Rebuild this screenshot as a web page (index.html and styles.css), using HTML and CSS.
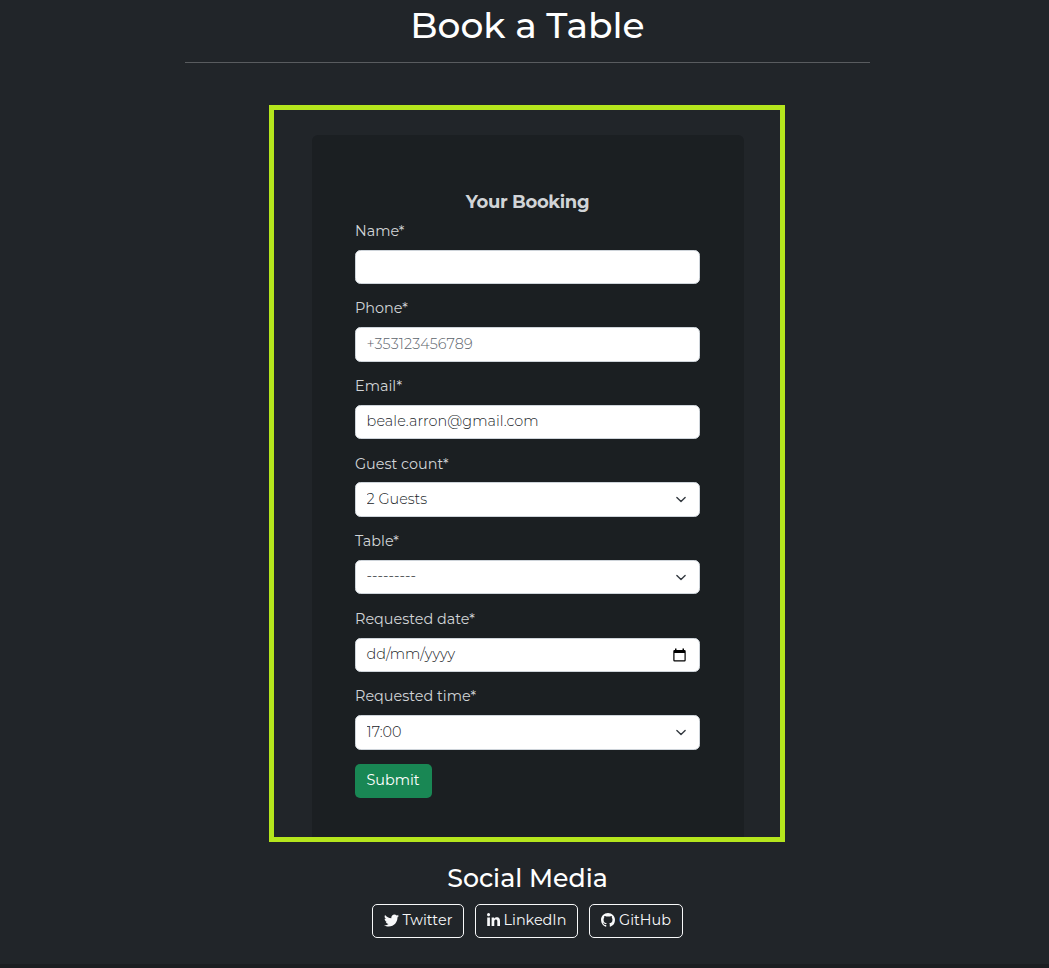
FILE: index.html
```html
<!DOCTYPE html>
<html lang="en">
<head>
<meta charset="utf-8">
<title>Book a Table</title>
<link rel="stylesheet" href="styles.css">
</head>
<body>
<main class="page">
  <h1 class="title">Book a Table</h1>
  <hr class="rule">
  <section class="frame">
    <form class="card">
      <h2 class="card-title">Your Booking</h2>
      <div class="group"><label class="label" for="name">Name*</label><input class="field" id="name" type="text"></div>
      <div class="group"><label class="label" for="phone">Phone*</label><input class="field phone" id="phone" type="tel" placeholder="+353123456789"></div>
      <div class="group"><label class="label" for="email">Email*</label><input class="field email" id="email" type="email" value="beale.arron@gmail.com"></div>
      <div class="group"><label class="label" for="guests">Guest count*</label><select class="field select" id="guests"><option>2 Guests</option></select></div>
      <div class="group"><label class="label" for="table">Table*</label><select class="field select" id="table"><option>---------</option></select></div>
      <div class="group date-group"><label class="label" for="date">Requested date*</label>
        <div class="field date" id="date"><span>dd/mm/yyyy</span>
          <svg class="calendar" width="13" height="14" viewBox="0 0 13 14"><path fill="#000" fill-rule="evenodd" d="M2 .5h1.500V2h6V.5H11V2h.5A1.200 1.200 0 0 1 12.700 3.200V12.300A1.200 1.200 0 0 1 11.500 13.500H1.500A1.200 1.200 0 0 1 .3 12.300V3.200A1.200 1.200 0 0 1 1.500 2H2zM1.500 5v7.300h10V5z"/></svg>
        </div>
      </div>
      <div class="group time-group"><label class="label" for="time">Requested time*</label><select class="field select time" id="time"><option>17:00</option></select></div>
      <button class="submit" type="button">Submit</button>
    </form>
  </section>
</main>
<footer class="footer">
  <h2 class="social-title">Social Media</h2>
  <nav class="links">
    <a class="link twitter"><svg width="15" height="15" viewBox="0 0 512 512"><path fill="currentColor" d="M459.370 151.716c.325 4.548.325 9.097.325 13.645 0 138.720-105.583 298.558-298.558 298.558-59.452 0-114.680-17.219-161.137-47.106 8.447.974 16.568 1.299 25.340 1.299 49.055 0 94.213-16.568 130.274-44.832-46.132-.975-84.792-31.188-98.112-72.772 6.498.974 12.995 1.624 19.818 1.624 9.421 0 18.843-1.300 27.614-3.573-48.081-9.747-84.143-51.980-84.143-102.985v-1.299c13.969 7.797 30.214 12.670 47.431 13.319-28.264-18.843-46.781-51.005-46.781-87.391 0-19.492 5.197-37.360 14.294-52.954 51.655 63.675 129.300 105.258 216.365 109.807-1.624-7.797-2.599-15.918-2.599-24.040 0-57.828 46.782-104.934 104.934-104.934 30.213 0 57.502 12.670 76.670 33.137 23.715-4.548 46.456-13.320 66.599-25.340-7.798 24.366-24.366 44.833-46.132 57.827 21.117-2.273 41.584-8.122 60.426-16.243-14.292 20.791-32.161 39.308-52.628 54.253z"/></svg><span>Twitter</span></a>
    <a class="link linkedin"><svg width="13" height="15" viewBox="0 0 448 512"><path fill="currentColor" d="M100.280 448H7.400V148.900h92.880zM53.790 108.100C24.090 108.100 0 83.500 0 53.800a53.790 53.790 0 0 1 107.580 0c0 29.700-24.100 54.300-53.790 54.300zM447.900 448h-92.680V302.400c0-34.700-.7-79.200-48.290-79.200-48.290 0-55.690 37.700-55.690 76.700V448h-92.780V148.900h89.080v40.800h1.300c12.400-23.500 42.690-48.300 87.880-48.300 94 0 111.280 61.900 111.280 142.300V448z"/></svg><span>LinkedIn</span></a>
    <a class="link github"><svg width="14" height="14" viewBox="0 0 16 16"><path fill="currentColor" d="M8 0C3.580 0 0 3.580 0 8c0 3.540 2.290 6.530 5.470 7.590.4.070.55-.17.55-.38 0-.19-.01-.82-.01-1.490-2.010.37-2.530-.49-2.690-.94-.09-.23-.48-.94-.82-1.130-.28-.15-.68-.52-.01-.53.63-.01 1.080.58 1.230.82.72 1.210 1.870.87 2.330.66.070-.52.28-.87.51-1.070-1.780-.2-3.640-.89-3.640-3.950 0-.87.31-1.590.82-2.150-.08-.2-.36-1.020.08-2.120 0 0 .67-.21 2.200.82.64-.18 1.320-.27 2-.27s1.360.09 2 .27c1.530-1.040 2.200-.82 2.200-.82.44 1.100.16 1.920.08 2.120.51.56.82 1.270.82 2.150 0 3.070-1.870 3.750-3.650 3.950.29.25.54.73.54 1.480 0 1.070-.01 1.930-.01 2.200 0 .21.15.46.55.38A8.010 8.010 0 0 0 16 8c0-4.420-3.580-8-8-8z"/></svg><span>GitHub</span></a>
  </nav>
</footer>
</body>
</html>
```
FILE: styles.css
```css
* { box-sizing: border-box; }
body {
  margin: 0;
  height: 968px;
  overflow: hidden;
  display: flex;
  flex-direction: column;
  background: #212529;
  color: #fff;
  font: 400 14.400px/21.600px Montserrat, Inter, "Open Sans", sans-serif;
}
h1, h2 { margin: 0; font-weight: 500; }
.page { width: 685px; margin-left: 185px; }
.title { padding-top: 4px; font-size: 36px; line-height: 43px; text-align: center; }
.rule { margin: 15px 0 42px; border: 0; height: 1px; background: #595c5f; }
.frame {
  width: 516px;
  height: 737px;
  margin-left: 84px;
  padding: 25px 36px 0 38px;
  border: 5px solid #b5e61d;
}
.card {
  height: 702px;
  padding: 56px 44px 0 43px;
  border-radius: 6px 6px 0 0;
  background: #1b1f22;
  color: #d1d4d7;
}
.card-title {
  margin-bottom: 7.900px;
  font-size: 18px;
  font-weight: 700;
  line-height: 22px;
  letter-spacing: -0.350px;
  text-align: center;
}
.group { margin-bottom: 14.406px; }
.label { display: block; height: 21.600px; margin-bottom: 7.200px; white-space: nowrap; }
.field {
  display: block;
  width: 100%;
  height: 34.400px;
  padding: 0 10.600px;
  border: 1px solid #ced4da;
  border-radius: 5.400px;
  background: #fff;
  color: #212529;
  font: inherit;
  font-weight: 300;
}
.field::placeholder { color: #5c646c; opacity: 1; }
.phone { letter-spacing: 0.100px; }
.email { letter-spacing: 0.080px; padding-bottom: 1px; }
.select {
  appearance: none;
  background: #fff url("data:image/svg+xml,%3csvg xmlns='http://www.w3.org/2000/svg' viewBox='0 0 16 16'%3e%3cpath fill='none' stroke='%23343a40' stroke-linecap='round' stroke-linejoin='round' stroke-width='2' d='m2 5 6 6 6-6'/%3e%3c/svg%3e") no-repeat right 12px center / 12px 11px;
}
.date { display: flex; align-items: center; justify-content: space-between; height: 34px; padding-right: 13px; }
.date-group .label { margin-bottom: 7.600px; }
.time { height: 35px; padding-top: 1px; }
.time-group { margin-bottom: 13.800px; }
.submit {
  display: block;
  width: 77px;
  height: 34px;
  padding: 0 1px 1px 0;
  border: 0;
  border-radius: 5px;
  background: #198754;
  color: #fff;
  font: inherit;
}
.footer { flex: 1; margin-top: 21px; border-bottom: 4px solid #1b1e21; padding-left: 6px; }
.social-title { font-size: 25.200px; line-height: 31px; text-align: center; }
.links { display: flex; justify-content: center; gap: 11px; margin: 10px 1px 0 0; }
.link {
  display: flex;
  align-items: center;
  justify-content: center;
  gap: 4px;
  height: 34px;
  padding: 0 0 1px 1px;
  border: 1px solid #f8f9fa;
  border-radius: 5px;
  color: #f8f9fa;
}
.link svg { margin-top: -1px; }
.twitter { width: 92px; }
.linkedin { width: 103px; }
.github { width: 94px; }
```
